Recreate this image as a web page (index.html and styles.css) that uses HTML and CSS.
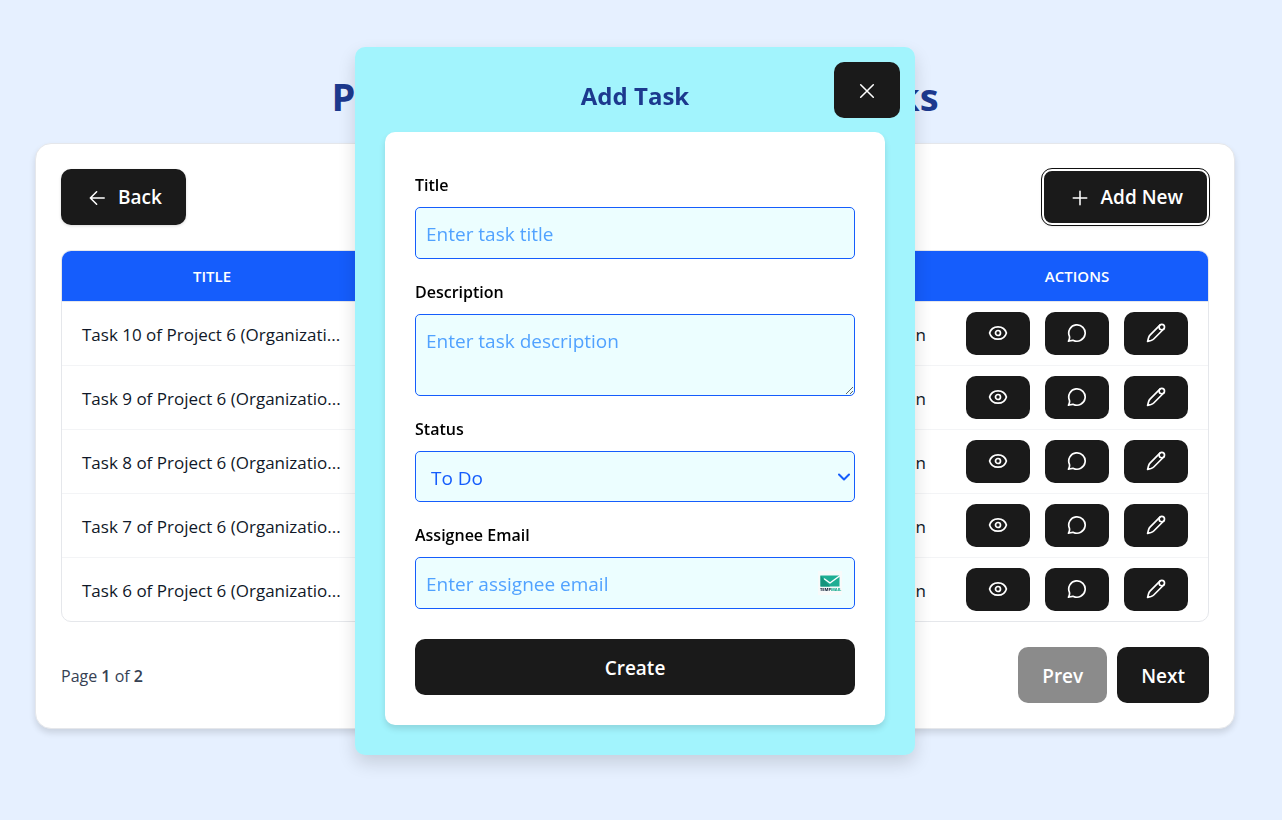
FILE: index.html
```
<!DOCTYPE html>
<html lang="en">
<head>
<meta charset="utf-8">
<title>Project Tasks</title>
<link rel="stylesheet" href="styles.css">
</head>
<body>
<svg class="sprite" aria-hidden="true">
  <symbol id="eye" viewBox="0 0 20 20"><path d="M1.6 10C2.8 5.8 6.1 3.8 10 3.8S17.2 5.8 18.4 10C17.2 14.2 13.9 16.2 10 16.2S2.8 14.2 1.6 10Z"/><circle cx="10" cy="10" r="2.5"/></symbol>
  <symbol id="chat" viewBox="0 0 20 20"><path d="M2.4 13.2A8.2 8.2 0 1 1 6.4 17.4C4.6 17 3.2 18.2 1.5 18.2C2.4 16.6 2.9 15 2.4 13.2Z"/></symbol>
  <symbol id="pencil" viewBox="0 0 20 20"><path d="M13.9 2.2L4 12.2C3.2 13 2.8 14 2.5 15L1.6 18.4L5 17.5C6 17.2 6.9 16.8 7.7 16L17.7 6"/><circle cx="15.8" cy="4.1" r="2.7"/></symbol>
</svg>
<main class="page">
  <h1 class="page-title">Project 6 (Organization 1): Tasks</h1>
  <section class="card">
    <div class="bar">
      <button class="btn btn-icon" type="button"><svg class="icon" viewBox="0 0 20 20"><path d="M18 10H2.6M9.6 3L2.6 10L9.6 17"/></svg>Back</button>
      <button class="btn btn-icon focused" type="button"><svg class="icon" viewBox="0 0 20 20"><path d="M10 2.5V17.5M2.5 10H17.5"/></svg>Add New</button>
    </div>
    <div class="table-box">
      <table class="tasks">
        <colgroup><col class="col-title"><col><col><col class="col-actions"></colgroup>
        <thead><tr><th>Title</th><th>Status</th><th>Project</th><th>Actions</th></tr></thead>
        <tbody>
          <tr><td>Task 10 of Project 6 (Organizati...</td><td>To Do</td><td class="end">Organization</td><td class="cell-actions"><div class="actions"><button class="btn btn-small" type="button" aria-label="View"><svg class="icon-row"><use href="#eye"/></svg></button><button class="btn btn-small" type="button" aria-label="Comments"><svg class="icon-row"><use href="#chat"/></svg></button><button class="btn btn-small" type="button" aria-label="Edit"><svg class="icon-row"><use href="#pencil"/></svg></button></div></td></tr>
          <tr><td>Task 9 of Project 6 (Organizatio...</td><td>To Do</td><td class="end">Organization</td><td class="cell-actions"><div class="actions"><button class="btn btn-small" type="button" aria-label="View"><svg class="icon-row"><use href="#eye"/></svg></button><button class="btn btn-small" type="button" aria-label="Comments"><svg class="icon-row"><use href="#chat"/></svg></button><button class="btn btn-small" type="button" aria-label="Edit"><svg class="icon-row"><use href="#pencil"/></svg></button></div></td></tr>
          <tr><td>Task 8 of Project 6 (Organizatio...</td><td>To Do</td><td class="end">Organization</td><td class="cell-actions"><div class="actions"><button class="btn btn-small" type="button" aria-label="View"><svg class="icon-row"><use href="#eye"/></svg></button><button class="btn btn-small" type="button" aria-label="Comments"><svg class="icon-row"><use href="#chat"/></svg></button><button class="btn btn-small" type="button" aria-label="Edit"><svg class="icon-row"><use href="#pencil"/></svg></button></div></td></tr>
          <tr><td>Task 7 of Project 6 (Organizatio...</td><td>To Do</td><td class="end">Organization</td><td class="cell-actions"><div class="actions"><button class="btn btn-small" type="button" aria-label="View"><svg class="icon-row"><use href="#eye"/></svg></button><button class="btn btn-small" type="button" aria-label="Comments"><svg class="icon-row"><use href="#chat"/></svg></button><button class="btn btn-small" type="button" aria-label="Edit"><svg class="icon-row"><use href="#pencil"/></svg></button></div></td></tr>
          <tr><td>Task 6 of Project 6 (Organizatio...</td><td>To Do</td><td class="end">Organization</td><td class="cell-actions"><div class="actions"><button class="btn btn-small" type="button" aria-label="View"><svg class="icon-row"><use href="#eye"/></svg></button><button class="btn btn-small" type="button" aria-label="Comments"><svg class="icon-row"><use href="#chat"/></svg></button><button class="btn btn-small" type="button" aria-label="Edit"><svg class="icon-row"><use href="#pencil"/></svg></button></div></td></tr>
        </tbody>
      </table>
    </div>
    <div class="bar">
      <p class="page-info">Page <b>1</b> of <b>2</b></p>
      <div class="pager">
        <button class="btn" type="button" disabled>Prev</button>
        <button class="btn" type="button">Next</button>
      </div>
    </div>
  </section>
</main>
<div class="overlay">
  <div class="modal" role="dialog" aria-labelledby="modal-title">
    <h2 class="modal-title" id="modal-title">Add Task</h2>
    <button class="btn btn-close" type="button" aria-label="Close"><svg class="icon" viewBox="0 0 20 20"><path d="M3 3L17 17M17 3L3 17"/></svg></button>
    <form class="form">
      <div class="field"><label for="title">Title</label><input class="control" id="title" type="text" placeholder="Enter task title"></div>
      <div class="field"><label for="description">Description</label><textarea class="control control-area" id="description" placeholder="Enter task description"></textarea></div>
      <div class="field"><label for="status">Status</label>
        <div class="stack"><select class="control control-select" id="status"><option>To Do</option><option>In Progress</option><option>Done</option></select><svg class="chevron" viewBox="0 0 12 12"><path d="M1 3.5L6 8.5L11 3.5"/></svg></div></div>
      <div class="field"><label for="email">Assignee Email</label>
        <div class="stack"><input class="control" id="email" type="email" placeholder="Enter assignee email">
          <svg class="mail" viewBox="0 0 24 24"><rect width="24" height="24" fill="#f8fafa"/><rect x="2.5" y="4.5" width="19" height="11" fill="#1fae93"/><path d="M2.5 4.5L12 15.5H2.5Z" fill="#15947c"/><path d="M6.5 8L12 12L21.5 5" fill="none" stroke="#fff" stroke-width="1.5"/><text class="mail-name" x="2" y="20">TEMP<tspan fill="#1fae93">MAIL</tspan></text></svg></div></div>
      <button class="btn btn-submit" type="button">Create</button>
    </form>
  </div>
</div>
</body>
</html>
```
FILE: styles.css
```
* { box-sizing: border-box; }
body { margin: 0; min-height: 100vh; background: #e6f0ff; color: #101828; font: 16px/27px "Segoe UI", "Open Sans", "Noto Sans", sans-serif; }
.sprite { position: absolute; width: 0; height: 0; }
svg { fill: none; stroke-linecap: round; stroke-linejoin: round; }
.page { padding: 68px 47px 40px 35px; }
.page-title { margin: 0 0 19px; font-size: 38px; line-height: 56px; font-weight: 700; color: #1c398e; text-align: center; }
.card { display: flex; flex-direction: column; gap: 25px; max-width: 1200px; margin: 0 auto; padding: 25px; background: #fff; border: 1px solid #e5e7eb; border-radius: 16px; box-shadow: 0 4px 6px rgb(0 0 0 / 12%); }
.bar { display: flex; justify-content: space-between; align-items: center; }
.btn { display: flex; align-items: center; justify-content: center; height: 56px; padding: 2px 24px 0; border: 0; border-radius: 10px; background: #1a1a1a; color: #fff; font: inherit; font-size: 19px; font-weight: 600; }
.btn:disabled { opacity: .5; }
.btn-icon { gap: 12px; padding: 1px 24px 0 27px; box-shadow: 0 1px 3px rgb(0 0 0 / 15%); }
.focused { border: 2px solid #fff; outline: 1px solid #101010; }
.icon { width: 18px; height: 18px; stroke: #fff; stroke-width: 1.7; }
.icon-row { width: 20px; height: 20px; stroke: #fff; stroke-width: 1.7; }
.table-box { overflow: hidden; border: 1px solid #e5e7eb; border-radius: 10px; }
.tasks { width: 100%; border-collapse: separate; border-spacing: 0; table-layout: fixed; }
.col-title { width: 300px; }
.col-actions { width: 262px; }
.tasks th { height: 51px; padding: 0 20px; background: #155dfc; border-bottom: 1px solid #e5e7eb; color: #fff; font-size: 15px; font-weight: 600; text-transform: uppercase; }
.tasks td { padding: 12px 20px 10px; border-bottom: 1px solid #f3f4f6; white-space: nowrap; font-size: 17px; }
.tasks .cell-actions { padding: 10px 20px; }
.tasks tr:last-child td { border-bottom: 0; }
.tasks .end { text-align: right; }
.actions { display: flex; gap: 15px; }
.btn-small { width: 64px; height: 43px; padding: 0 0 1px; }
.page-info { margin: 0; padding-top: 2px; color: #364153; }
.page-info b { font-weight: 600; }
.pager { display: flex; gap: 10px; }
.overlay { position: fixed; inset: 0; display: flex; align-items: center; justify-content: center; padding: 0 12px 18px 0; }
.modal { position: relative; width: 560px; padding: 30px; background: #a2f4fd; border-radius: 10px; box-shadow: 0 8px 18px rgb(0 0 0 / 14%); }
.modal-title { margin: 0 0 17px; font-size: 24px; line-height: 38px; font-weight: 700; color: #1c398e; text-align: center; }
.btn-close { position: absolute; top: 15px; right: 15px; width: 66px; padding: 2px 0 0; }
.form { display: flex; flex-direction: column; gap: 20px; padding: 40px 30px 30px; background: #fff; border-radius: 10px; box-shadow: 0 4px 6px rgb(0 0 0 / 12%); }
.field { display: flex; flex-direction: column; gap: 8px; color: #000; font-weight: 600; font-size: 16px; }
.control { display: block; width: 100%; height: 52px; padding: 11px 10px 9px; background: #ecfeff; border: 1px solid #155dfc; border-radius: 5px; color: #155dfc; font: inherit; font-size: 19px; font-weight: 400; line-height: 30px; }
.control::placeholder { color: #51a2ff; opacity: 1; }
.control-area { height: 82px; resize: vertical; }
.control-select { height: 51px; padding: 11px 15px 9px; appearance: none; }
.stack { display: grid; align-items: center; }
.stack > * { grid-area: 1 / 1; }
.chevron { justify-self: end; width: 12px; height: 12px; margin-right: 5px; stroke: #155dfc; stroke-width: 2; pointer-events: none; }
.mail { justify-self: end; width: 24px; height: 24px; margin-right: 13px; }
.mail-name { font-size: 4px; font-weight: 800; fill: #1c2b40; }
.btn-submit { margin-top: 10px; }
```
